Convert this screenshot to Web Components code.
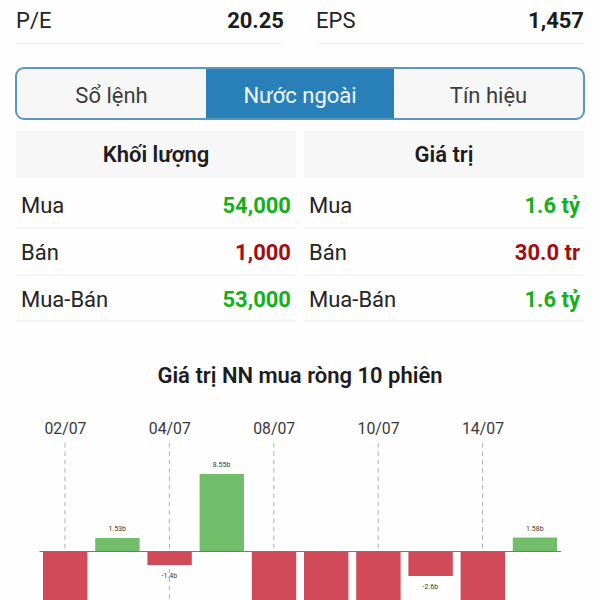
<!DOCTYPE html>
<html lang="vi">
<head>
<meta charset="UTF-8">
<title>Nước ngoài</title>
<style>
    body {
        margin: 0;
        height: 600px;
        overflow: hidden;
        background: #fefefe;
        color: #242426;
        font: 22px/26px Roboto, "Noto Sans", sans-serif;
    }
    .ratios {
        display: grid;
        grid-template-columns: 1fr 1fr;
        gap: 32px;
        padding: 0 16px;
    }
    .tables {
        display: grid;
        grid-template-columns: 1fr 1fr;
        gap: 8px;
        height: 192px;
        padding: 11px 16px 0;
    }
</style>
</head>
<body>
    <div class="ratios">
        <ratio-item label="P/E">20.25</ratio-item>
        <ratio-item label="EPS">1,457</ratio-item>
    </div>
    <segment-tabs>
        <segment-tab>Sổ lệnh</segment-tab>
        <segment-tab active>Nước ngoài</segment-tab>
        <segment-tab>Tín hiệu</segment-tab>
    </segment-tabs>
    <div class="tables">
        <trade-table heading="Khối lượng">
            <trade-row label="Mua">54,000</trade-row>
            <trade-row label="Bán" down>1,000</trade-row>
            <trade-row label="Mua-Bán">53,000</trade-row>
        </trade-table>
        <trade-table heading="Giá trị" style="--value-pad: 4px">
            <trade-row label="Mua">1.6 tỷ</trade-row>
            <trade-row label="Bán" down>30.0 tr</trade-row>
            <trade-row label="Mua-Bán">1.6 tỷ</trade-row>
        </trade-table>
    </div>
    <net-chart>Giá trị NN mua ròng 10 phiên</net-chart>

<script>
class RatioItem extends HTMLElement {
    connectedCallback() {
        this.attachShadow({ mode: 'open' });
        this.shadowRoot.innerHTML = `
            <style>
                :host {
                    display: flex;
                    justify-content: space-between;
                    box-sizing: border-box;
                    height: 44px;
                    padding-top: 8px;
                    border-bottom: 1px solid #ededed;
                }
                b {
                    font-weight: 700;
                    color: #1c1c1e;
                }
            </style>
            <span>${this.getAttribute('label')}</span>
            <b><slot></slot></b>
        `;
    }
}
customElements.define('ratio-item', RatioItem);

class SegmentTabs extends HTMLElement {
    connectedCallback() {
        this.attachShadow({ mode: 'open' });
        this.shadowRoot.innerHTML = `
            <style>
                :host {
                    display: grid;
                    grid-template-columns: 189px 188px 1fr;
                    box-sizing: border-box;
                    height: 53px;
                    margin: 23px 15px 0;
                    border: 2px solid #5a97ba;
                    border-radius: 9px;
                    overflow: hidden;
                    background: #f7f7f8;
                }
            </style>
            <slot></slot>
        `;
    }
}
customElements.define('segment-tabs', SegmentTabs);

class SegmentTab extends HTMLElement {
    connectedCallback() {
        this.attachShadow({ mode: 'open' });
        this.shadowRoot.innerHTML = `
            <style>
                :host {
                    display: flex;
                    align-items: center;
                    justify-content: center;
                    padding-top: 4px;
                    margin-bottom: -1px;
                    color: #3c3c3e;
                }
                :host([active]) {
                    background: #2980b9;
                    color: #f2f8fc;
                }
            </style>
            <slot></slot>
        `;
    }
}
customElements.define('segment-tab', SegmentTab);

class TradeTable extends HTMLElement {
    connectedCallback() {
        this.attachShadow({ mode: 'open' });
        this.shadowRoot.innerHTML = `
            <style>
                :host {
                    display: block;
                }
                h3 {
                    margin: 0 0 4px;
                    padding-top: 1px;
                    height: 46px;
                    background: #f7f7f7;
                    font-size: 22px;
                    font-weight: 600;
                    line-height: 46px;
                    text-align: center;
                    color: #1c1c1e;
                }
            </style>
            <h3>${this.getAttribute('heading')}</h3>
            <slot></slot>
        `;
    }
}
customElements.define('trade-table', TradeTable);

class TradeRow extends HTMLElement {
    connectedCallback() {
        this.attachShadow({ mode: 'open' });
        this.shadowRoot.innerHTML = `
            <style>
                :host {
                    display: flex;
                    align-items: center;
                    justify-content: space-between;
                    box-sizing: border-box;
                    height: 46.8px;
                    padding: 3.5px var(--value-pad, 5px) 0 5px;
                    border-bottom: 2px solid #f4f4f4;
                }
                b {
                    font-weight: 700;
                    color: #14b01c;
                }
                :host([down]) b {
                    color: #a50c12;
                }
            </style>
            <span>${this.getAttribute('label')}</span>
            <b><slot></slot></b>
        `;
    }
}
customElements.define('trade-row', TradeRow);

const SESSIONS = [
    { date: '02/07', height: -60 },
    { height: 13.5, label: '1.53b' },
    { date: '04/07', height: -13.5, label: '-1.4b' },
    { height: 77.5, label: '8.55b' },
    { date: '08/07', height: -60 },
    { height: -60 },
    { date: '10/07', height: -60 },
    { height: -24.5, label: '-2.6b' },
    { date: '14/07', height: -60 },
    { height: 14, label: '1.58b' }
];

class NetChart extends HTMLElement {
    connectedCallback() {
        const zero = 150.5;
        let grid = '';
        let bars = '';
        SESSIONS.forEach((s, i) => {
            const x = 65 + i * 52.2;
            if (s.date) {
                // the guide stops at the bar when the bar runs off the bottom
                const end = s.height < -50 ? zero : 200;
                grid += `<line class="guide" x1="${x}" x2="${x}" y1="42" y2="${end}"/>
                    <text class="date" x="${x + 0.4}" y="33">${s.date}</text>`;
            }
            const top = s.height > 0 ? zero - s.height : zero;
            bars += `<rect x="${x - 22}" y="${top}" width="44.4" height="${Math.abs(s.height)}"
                fill="${s.height > 0 ? '#72bd6a' : '#d14a59'}"/>`;
            if (s.label) {
                const y = s.height > 0 ? top - 7 : top - s.height + 13;
                bars += `<text class="value" x="${x}" y="${y}">${s.label}</text>`;
            }
        });
        this.attachShadow({ mode: 'open' });
        this.shadowRoot.innerHTML = `
            <style>
                :host {
                    display: block;
                    padding-top: 39px;
                }
                h2 {
                    margin: 0 0 11px;
                    font-size: 22px;
                    font-weight: 600;
                    line-height: 28px;
                    text-align: center;
                    color: #1c1c1e;
                }
                svg {
                    display: block;
                }
                text {
                    text-anchor: middle;
                }
                .date {
                    font-size: 15.8px;
                    fill: #39393b;
                }
                .value {
                    font-size: 7px;
                    fill: #333;
                }
                .guide {
                    stroke: #b0aeb0;
                    stroke-dasharray: 4.5 3.9;
                }
            </style>
            <h2><slot></slot></h2>
            <svg width="600" height="200" viewBox="0 0 600 200">
                ${grid}
                ${bars}
                <line x1="39.5" x2="561" y1="${zero}" y2="${zero}" stroke="#77777b"/>
            </svg>
        `;
    }
}
customElements.define('net-chart', NetChart);
</script>
</body>
</html>
